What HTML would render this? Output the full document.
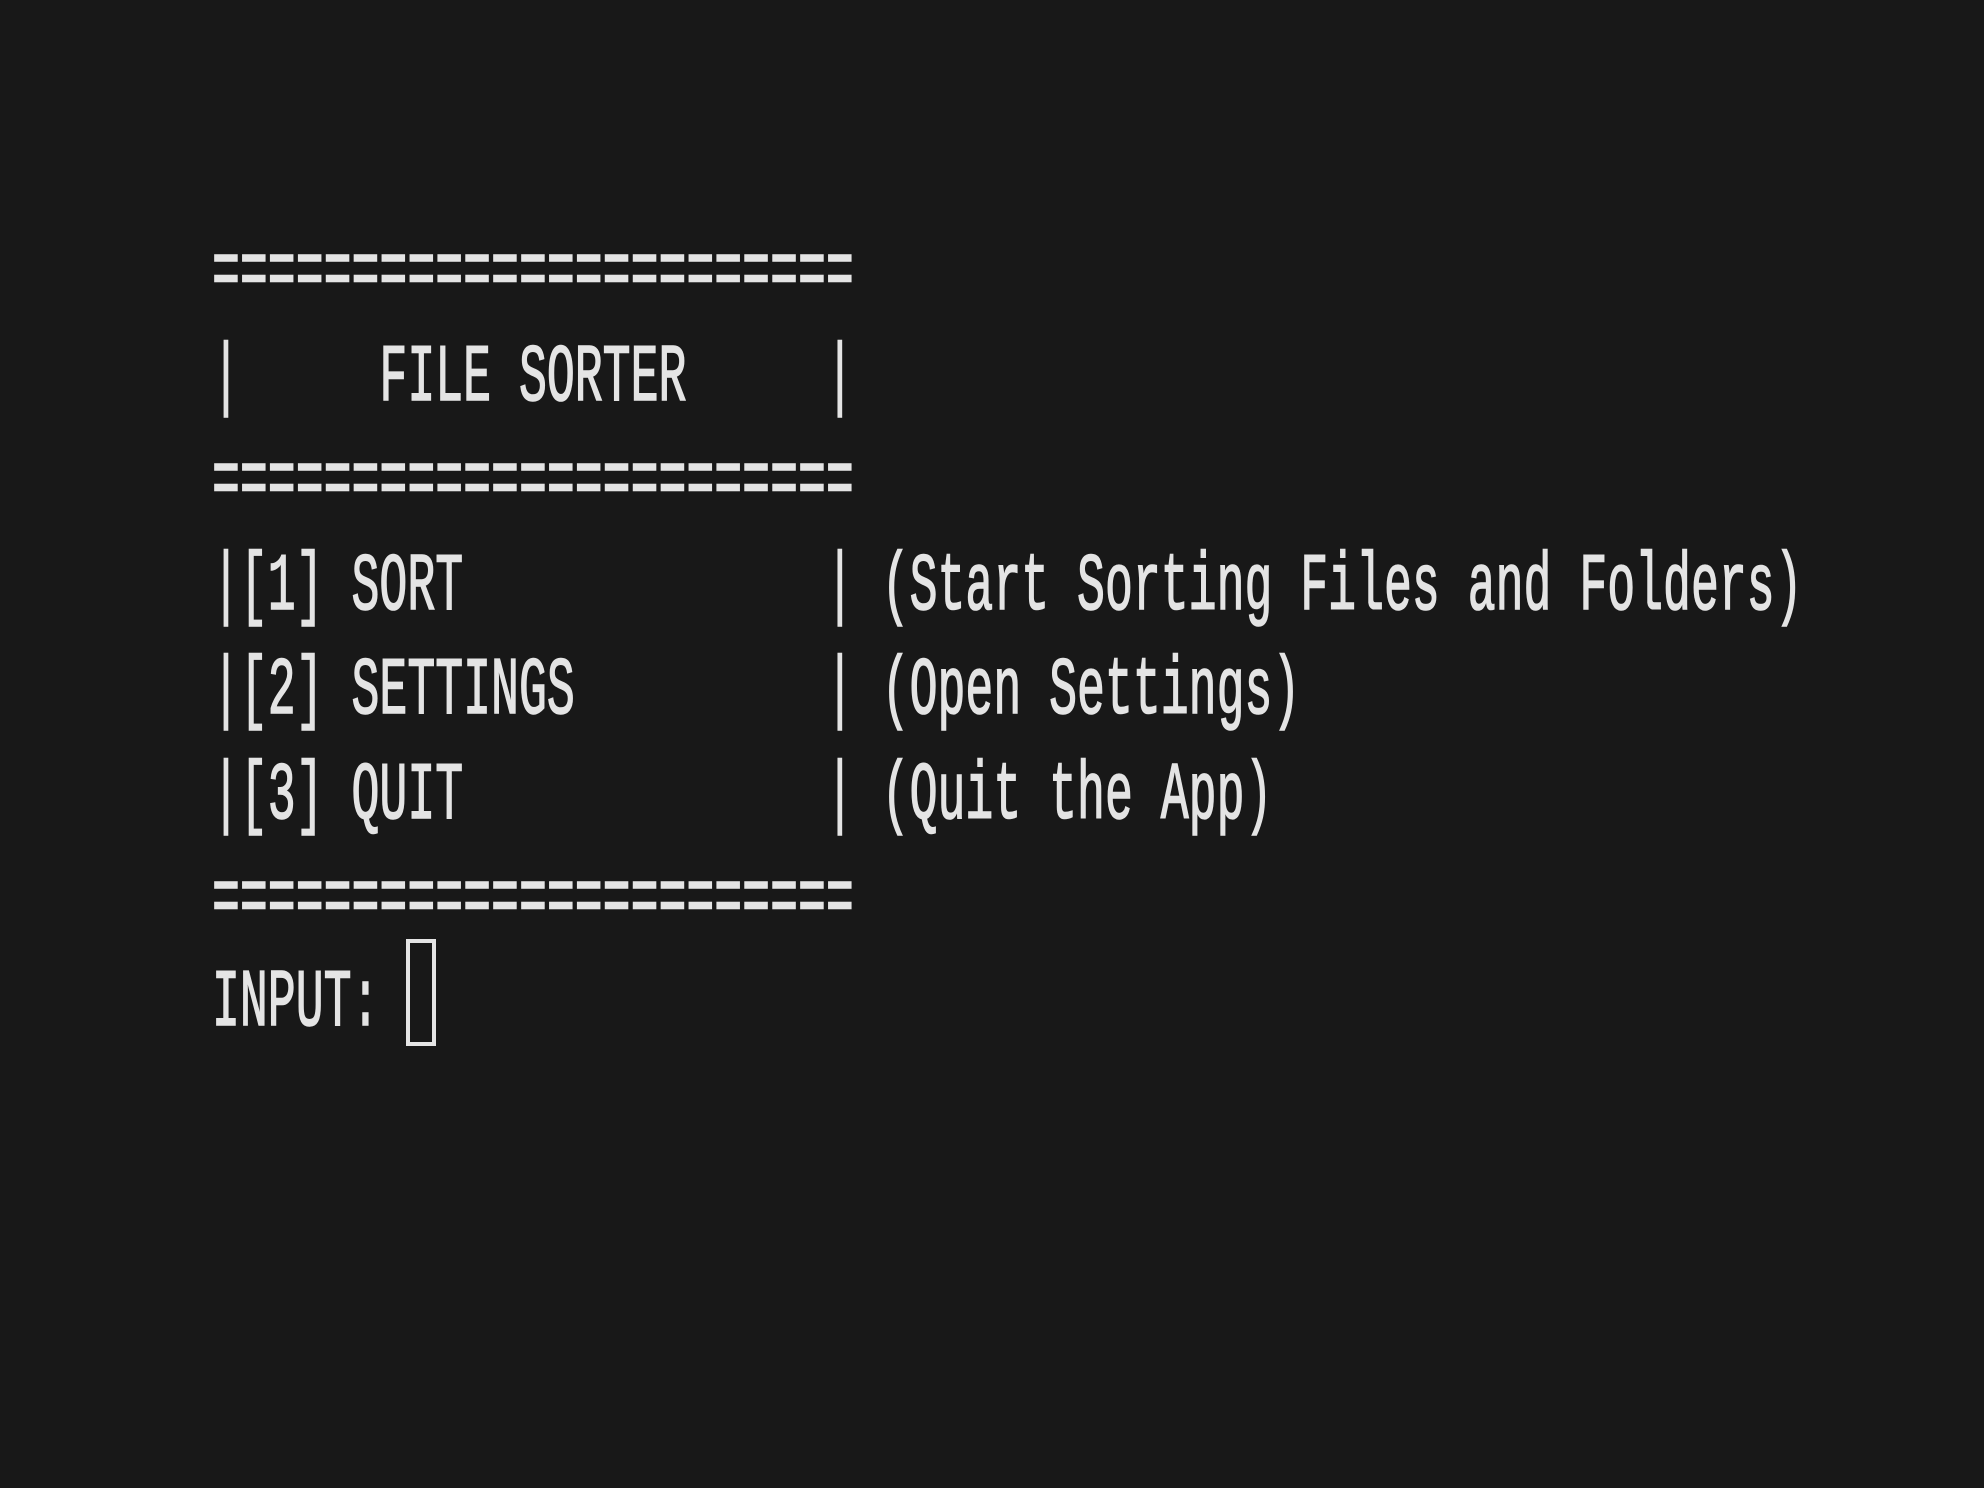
<!DOCTYPE html>
<html><head><meta charset="utf-8"><style>
html,body{margin:0;padding:0;background:#181818;width:1984px;height:1488px;overflow:hidden}
.l{position:absolute;left:212px;font-family:"Liberation Mono",monospace;font-size:46.5px;line-height:46.5px;height:46.5px;white-space:pre;color:#e4e4e4;-webkit-text-stroke:0.9px #e4e4e4;transform:scaleY(1.75);transform-origin:0 50%}
.cur{position:absolute;left:406px;top:939px;width:22px;height:99px;border:4px solid #e4e4e4}
</style></head><body>
<div class="l" style="top:251px">=======================</div>
<div class="l" style="top:356px">|     FILE SORTER     |</div>
<div class="l" style="top:460px">=======================</div>
<div class="l" style="top:565px">|[1] SORT             | (Start Sorting Files and Folders)</div>
<div class="l" style="top:669px">|[2] SETTINGS         | (Open Settings)</div>
<div class="l" style="top:774px">|[3] QUIT             | (Quit the App)</div>
<div class="l" style="top:878px">=======================</div>
<div class="l" style="top:981px">INPUT:</div>
<div class="cur"></div>
</body></html>
